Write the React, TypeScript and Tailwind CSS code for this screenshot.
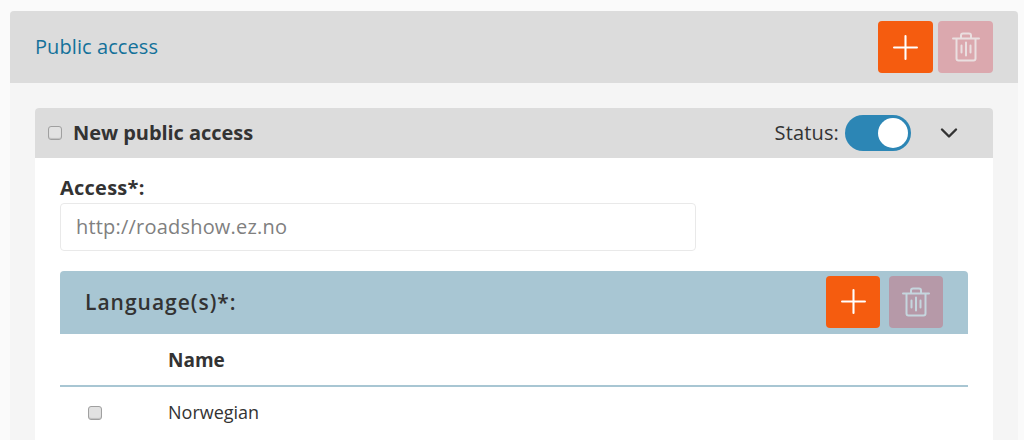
import React from "react";

function Plus({ size }: { size: number }) {
  return (
    <svg width={size} height={size} viewBox="0 0 24 24" fill="none" stroke="#fff" strokeWidth="2" strokeLinecap="round">
      <path d="M12 1v22M1 12h22" />
    </svg>
  );
}

function Trash({ color }: { color: string }) {
  return (
    <svg width="28" height="30" viewBox="0 0 28 30" fill="none" stroke={color} strokeWidth="2" strokeLinejoin="round" strokeLinecap="round">
      <path d="M1 6.5h26" />
      <path d="M9 6V3.5A2 2 0 0 1 11 1.5h6a2 2 0 0 1 2 2V6" />
      <path d="M4.5 7v19.500a2 2 0 0 0 2 2h15a2 2 0 0 0 2-2V7" />
      <path d="M14 10.500v13M9.500 13.500v7M18.500 13.500v7" />
    </svg>
  );
}

function Check() {
  return (
    <span className="block w-[14px] h-[14px] rounded-[3px] border border-[#a0a0a0] bg-[#e2e2e2] shadow-[inset_0_-1px_1px_rgba(0,0,0,0.15)] shrink-0" />
  );
}

export default function App() {
  return (
    <div className="w-[1024px] h-[440px] overflow-hidden bg-[#fafafa] pl-[10px] pr-[6px] pt-[11px] font-['Open_Sans',sans-serif] text-[#333]">
      <div className="h-[429px] bg-[#f5f5f5] rounded-t-[4px] overflow-hidden">
        <div className="h-[72px] bg-[#dcdcdc] flex items-center pl-[25px] pr-[25px]">
          <span className="text-[20px] tracking-[0.08px] text-[#13719a]">Public access</span>
          <div className="ml-auto flex gap-[5px]">
            <div className="w-[55px] h-[52px] rounded-[4px] bg-[#f55c0f] flex items-center justify-center">
              <Plus size={25} />
            </div>
            <div className="w-[55px] h-[52px] rounded-[4px] bg-[#dba8ae] flex items-center justify-center">
              <Trash color="#eadfe0" />
            </div>
          </div>
        </div>
        <div className="px-[25px] pt-[25px]">
          <div className="bg-white rounded-t-[4px] h-[400px]">
            <div className="h-[50px] bg-[#dcdcdc] rounded-t-[4px] flex items-center pl-[13px]">
              <Check />
              <span className="ml-[11px] text-[20px] font-bold -tracking-[0.05px]">New public access</span>
              <span className="ml-auto text-[20px] tracking-[0.15px]">Status:</span>
              <div className="ml-[6px] w-[66px] h-[36px] rounded-full bg-[#2c86b5] relative">
                <span className="absolute right-[3px] top-[3px] w-[30px] h-[30px] rounded-full bg-white" />
              </div>
              <svg className="ml-[29px] mr-[35px]" width="18" height="12" viewBox="0 0 18 12" fill="none" stroke="#333" strokeWidth="2.400" strokeLinecap="round" strokeLinejoin="round">
                <path d="M2 2.500 9 9.500 16 2.500" />
              </svg>
            </div>
            <div className="px-[25px]">
              <div className="pt-[16px] h-[45px] text-[20px] font-bold tracking-[0.25px] leading-[28px]">Access*:</div>
              <div className="w-[636px] h-[48px] border border-[#e9e9e9] rounded-[4px] flex items-center pl-[15px] text-[20px] tracking-[0.2px] text-[#808080]">
                http://roadshow.ez.no
              </div>
              <div className="mt-[20px] h-[63px] bg-[#a8c6d3] rounded-t-[4px] flex items-center pl-[25px] pr-[25px]">
                <span className="text-[21px] font-semibold tracking-[1px] text-[#333]">Language(s)*:</span>
                <div className="ml-auto flex gap-[9px] mb-[2px]">
                  <div className="w-[54px] h-[52px] rounded-[4px] bg-[#f55c0f] flex items-center justify-center">
                    <Plus size={25} />
                  </div>
                  <div className="w-[54px] h-[52px] rounded-[4px] bg-[#b699a8] flex items-center justify-center">
                    <Trash color="#c5d6de" />
                  </div>
                </div>
              </div>
              <div className="h-[53px] border-b-2 border-[#a8c6d3] flex items-center pl-[108px] pt-[2px] text-[19px] font-bold">Name</div>
              <div className="h-[53px] flex items-center pl-[28px]">
                <span className="-mt-[2px]"><Check /></span>
                <span className="ml-[66px] text-[18px] -mt-[2px]">Norwegian</span>
              </div>
            </div>
          </div>
        </div>
      </div>
    </div>
  );
}
